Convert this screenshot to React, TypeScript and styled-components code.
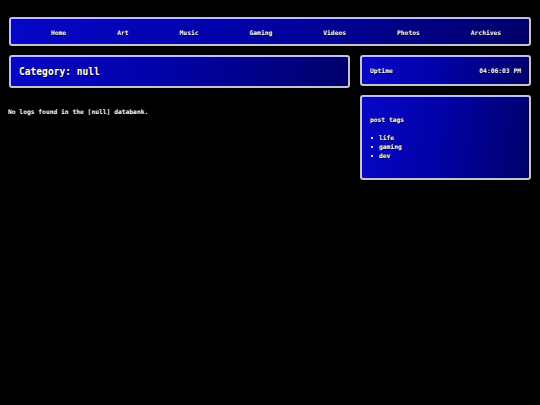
import React from "react";
import styled, { createGlobalStyle } from "styled-components";

const GlobalStyle = createGlobalStyle`
  html, body {
    margin: 0;
    padding: 0;
    background: #000;
  }
  body {
    font-family: "DejaVu Sans Mono", "Liberation Mono", monospace;
    color: #fff;
  }
`;

const Page = styled.div`
  padding: 17px 9px 9px;
  display: flex;
  flex-direction: column;
  gap: 9px;
`;

const Panel = styled.div`
  box-sizing: border-box;
  border: 2px solid #c4c4cc;
  border-radius: 3px;
  background: linear-gradient(100deg, #0606c8 0%, #0202a8 45%, #00006a 100%);
  text-shadow: 1px 1px 0 #000;
  font-weight: bold;
`;

const Nav = styled(Panel)`
  height: 29px;
  display: flex;
  align-items: center;
  gap: 51px;
  padding: 2px 0 0 40px;
`;

const NavLink = styled.a`
  color: #fff;
  text-decoration: none;
  font-size: 6.3px;
`;

const Layout = styled.div`
  display: grid;
  grid-template-columns: 341px 171px;
  gap: 10px;
  align-items: start;
`;

const Main = styled.main`
  display: flex;
  flex-direction: column;
`;

const TitleBox = styled(Panel)`
  height: 33px;
  display: flex;
  align-items: center;
  padding: 0 8px;
`;

const Title = styled.h1`
  margin: 0;
  font-size: 9.6px;
  font-weight: bold;
`;

const Empty = styled.p`
  margin: 20px 0 0 -1px;
  font-size: 6.3px;
  font-weight: bold;
`;

const Side = styled.aside`
  display: flex;
  flex-direction: column;
  gap: 9px;
`;

const UptimeBox = styled(Panel)`
  height: 31px;
  display: flex;
  align-items: center;
  justify-content: space-between;
  padding: 0 8px;
  font-size: 6.3px;
`;

const TagsBox = styled(Panel)`
  height: 85px;
  padding: 19px 8px 0;
  font-size: 6.3px;
`;

const TagsTitle = styled.div`
  margin-bottom: 10px;
`;

const TagList = styled.ul`
  list-style: none;
  margin: 0;
  padding: 0;
`;

const Tag = styled.li`
  line-height: 9px;
  &::before {
    content: "";
    display: inline-block;
    width: 2px;
    height: 2px;
    background: #dde;
    margin: 0 6px 1px 1px;
    vertical-align: middle;
  }
`;

const links = ["Home", "Art", "Music", "Gaming", "Videos", "Photos", "Archives"];
const tags = ["life", "gaming", "dev"];

export default function App() {
  return (
    <>
      <GlobalStyle />
      <Page>
        <Nav>
          {links.map((l) => (
            <NavLink key={l} href="#">
              {l}
            </NavLink>
          ))}
        </Nav>
        <Layout>
          <Main>
            <TitleBox>
              <Title>Category: null</Title>
            </TitleBox>
            <Empty>No logs found in the [null] databank.</Empty>
          </Main>
          <Side>
            <UptimeBox>
              <span>Uptime</span>
              <span>04:06:03 PM</span>
            </UptimeBox>
            <TagsBox>
              <TagsTitle>post tags</TagsTitle>
              <TagList>
                {tags.map((t) => (
                  <Tag key={t}>{t}</Tag>
                ))}
              </TagList>
            </TagsBox>
          </Side>
        </Layout>
      </Page>
    </>
  );
}
